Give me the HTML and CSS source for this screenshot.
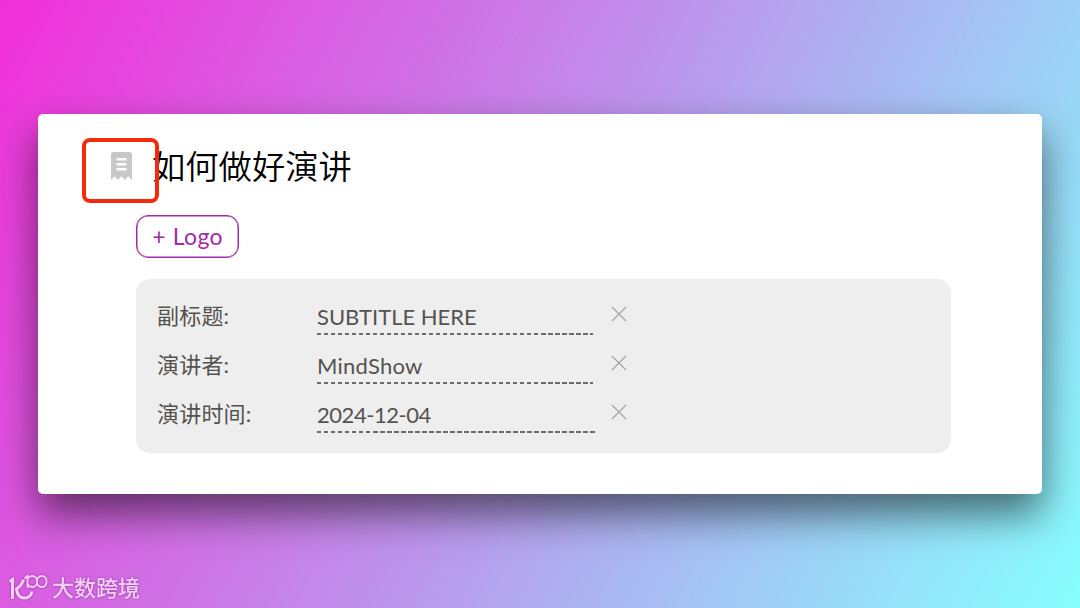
FILE: index.html
```
<!DOCTYPE html>
<html lang="zh-CN">
<head>
    <meta charset="UTF-8">
    <meta name="viewport" content="width=device-width, initial-scale=1.0">
    <title>如何做好演讲</title>
    <link rel="stylesheet" href="styles.css">
</head>
<body>
    <main class="card">
        <div class="title-row">
            <svg class="note-icon" viewBox="0 0 21 28">
                <path fill="#c9c8c8" fill-rule="evenodd" d="M2.5 0h16A2.5 2.5 0 0 1 21 2.5V28l-3.8-3.8L13.8 28l-3.4-3.8L7 28l-3.3-3.8L0 28V2.5A2.5 2.5 0 0 1 2.5 0zM5.5 6v2.600h10V6zM5.5 11v2.600h10V11zM5.5 16v2.600h10V16z"/>
            </svg>
            <h1>如何做好演讲</h1>
            <span class="highlight"></span>
        </div>

        <button class="logo-btn"><span class="plus">+</span>Logo</button>

        <div class="info">
            <div class="row">
                <label>副标题:</label>
                <span class="field field-subtitle">SUBTITLE HERE</span>
                <svg class="close" viewBox="0 0 16 16"><path d="M1 1l14 14M15 1L1 15"/></svg>
            </div>
            <div class="row">
                <label>演讲者:</label>
                <span class="field field-speaker">MindShow</span>
                <svg class="close" viewBox="0 0 16 16"><path d="M1 1l14 14M15 1L1 15"/></svg>
            </div>
            <div class="row">
                <label>演讲时间:</label>
                <span class="field field-date">2024-12-04</span>
                <svg class="close close-date" viewBox="0 0 16 16"><path d="M1 1l14 14M15 1L1 15"/></svg>
            </div>
        </div>
    </main>

    <!-- 水印 -->
    <div class="watermark">
        <svg class="mark" viewBox="0 0 40 28">
            <path class="thick" d="M0.5 7.500L3.500 5.500V25M14.500 5.500q-1 5-7 9.500q1 9 8 9q6 0 7.500-6.500"/>
            <path class="thin" d="M15.500 4.500L18.500 2v12M18.500 7.500a4.800 4.800 0 1 1 9.500 0a4.800 4.800 0 1 1 9.500 0a4.800 4.800 0 1 1-9.500 0a4.800 4.800 0 1 1-9.500 0"/>
        </svg>
        <span>大数跨境</span>
    </div>
</body>
</html>
```

FILE: styles.css
```
* {
    box-sizing: border-box;
}
body {
    margin: 0;
    width: 1080px;
    height: 608px;
    padding: 114px 38px 0;
    overflow: hidden;
    font-family: Lato, "Noto Sans CJK SC", sans-serif;
    background: linear-gradient(117deg, #f22fd9 0%, #c87fe8 40%, #acb3f1 64%, #87fffe 100%);
}
.card {
    height: 380px;
    padding: 29px 91px 0 98px;
    background: #fff;
    border-radius: 5px;
    box-shadow: 0 20px 40px rgba(0, 0, 0, 0.55);
}
.title-row {
    position: relative;
    display: flex;
    align-items: center;
    height: 46px;
    margin-left: -25px;
}
.note-icon {
    width: 21px;
    height: 28px;
    margin-right: 20px;
}
h1 {
    margin: 0;
    font-size: 33.3px;
    line-height: 46px;
    font-weight: 350;
    color: #000;
}
.highlight {
    position: absolute;
    left: -29px;
    top: -5px;
    width: 77px;
    height: 65px;
    border: 4px solid #f42a0c;
    border-radius: 8px;
}
.logo-btn {
    display: flex;
    align-items: center;
    justify-content: center;
    gap: 7px;
    width: 103px;
    height: 43px;
    margin: 26px 0 21px;
    padding: 0 0 2px;
    border: 1.5px solid #a32ba6;
    border-radius: 12px;
    background: #fff;
    color: #a32ba6;
    box-shadow: inset 0 0 0 0.5px #a32ba6;
    font-family: inherit;
    font-size: 23px;
    letter-spacing: 0.3px;
}
.info {
    height: 174px;
    padding: 14px 21px;
    border-radius: 14px;
    background: #eee;
    color: #55524f;
    font-size: 22px;
}
.row {
    display: flex;
    align-items: center;
    height: 48.7px;
}
.row label {
    width: 160px;
    padding-bottom: 6px;
    letter-spacing: 0.2px;
}
.field {
    width: 276px;
    height: 36px;
    line-height: 36px;
    background: repeating-linear-gradient(90deg, #6b6b6b 0 4.5px, transparent 4.5px 7px) left bottom / 100% 2px no-repeat;
}
.field-speaker {
    letter-spacing: 0.25px;
}
.field-date {
    width: 279px;
    letter-spacing: -0.45px;
}
.close {
    width: 16px;
    height: 16px;
    margin: 0 0 6px 18px;
    fill: none;
    stroke: #a3a3a3;
    stroke-width: 1.2;
}
.close-date {
    margin-left: 15px;
}
.watermark {
    position: absolute;
    left: 9px;
    top: 573px;
    display: flex;
    align-items: center;
    gap: 3px;
    color: #f6cff5;
    font-size: 22px;
    font-weight: 500;
    line-height: 30px;
    filter: drop-shadow(0 0 1px rgba(90, 20, 110, 0.6));
}
.mark {
    width: 40px;
    height: 28px;
    fill: none;
    stroke: #f6cff5;
}
.thick {
    stroke-width: 3;
}
.thin {
    stroke-width: 1.8;
}
```
